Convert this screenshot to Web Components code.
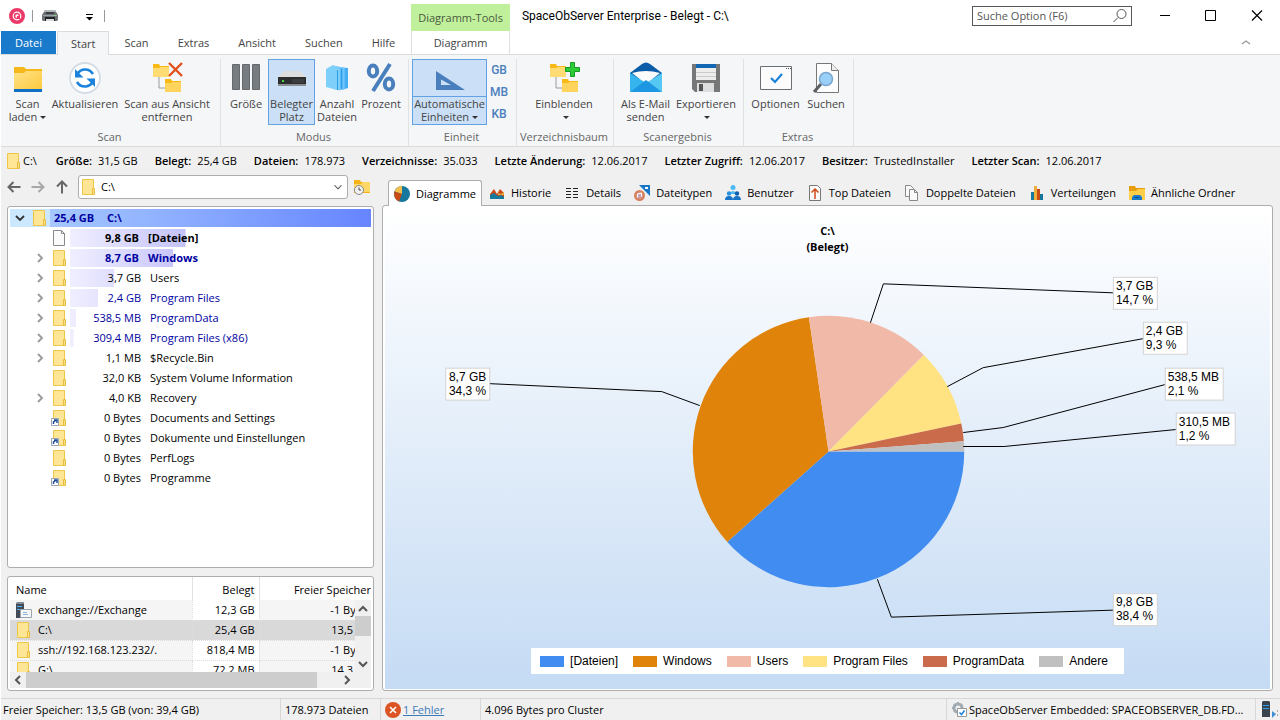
<!DOCTYPE html>
<html lang="de">
<head>
<meta charset="utf-8">
<title>SpaceObServer Enterprise - Belegt - C:\</title>
<style>
    html, body {
        height: 100%;
        margin: 0;
    }

    body {
        font: 11px/16px "Open Sans", "Noto Sans", sans-serif;
        color: #000;
        background: #f0f0f0;
        overflow: hidden;
    }
</style>
</head>
<body>
<so-app></so-app>

<script>
const folder = `
    <path d="M1.500.5h11v15h-11z" fill="#ffe596" stroke="#eec648"/>
    <path d="M11.500 9.500h2v6h-2z" fill="#ffe085" stroke="#e8bc3c"/>`;

const smallFolders = `
    <path d="M8 15v11h6" fill="none" stroke="#9a9a9a"/>
    <path d="M2 2h6l1 2h9v11H2z" fill="#f9b917"/>
    <path d="M2 6h6l2-1h8v10H2z" fill="#ffdc73"/>
    <path d="M14 17h6l1 2h9v11H14z" fill="#f9b917"/>
    <path d="M14 21h6l2-1h8v10H14z" fill="#ffd45c"/>`;

const link = `
    <path d="M-.5 8.500h7v7h-7z" fill="#fff" stroke="#9aa4b4"/>
    <path d="M1.500 14v-2l3-2M2 10h3v3" fill="none" stroke="#1e4c96" stroke-width="1.500"/>`;

// name: [viewBox size, markup]
const icons = {
    logo: [16, `<circle cx="8" cy="8" r="6.200" fill="#fff" stroke="#ec3b68" stroke-width="3.600"/><path d="M8 10.500a2.500 2.500 0 1 1 2.500-2.500" fill="none" stroke="#ec3b68" stroke-width="1.600"/><path d="M8 8h3v3H8z" fill="#ec3b68"/>`],
    printer: [16, `<path d="M3 2h10l3 5v5l-1 1H1l-1-1V7z" fill="#6c7276"/><path d="M3 2h10l1 2H2z" fill="#b4b8bb"/><path d="M4 4h8v2H4z" fill="#3c4044"/><path d="M1 7h14v1H1z" fill="#9ba0a4"/><path d="M3 9h10v4H3z" fill="#222"/><path d="M4 11h8v2H4z" fill="#d8dadc"/><path d="M12 7h2v1h-2z" fill="#7fd077"/>`],
    quickmenu: [16, `<path d="M5 6.500h7" stroke="#000"/><path d="M5 9h7l-3.500 3.500z" fill="#000"/>`],
    search: [16, `<circle cx="9.500" cy="6" r="4.500" fill="none" stroke="#555"/><path d="M6 9.500L1.500 14" stroke="#555"/>`],
    minimize: [16, `<path d="M3 7.500h10" stroke="#000"/>`],
    maximize: [16, `<path d="M2.500 2.500h10v10h-10z" fill="none" stroke="#000"/>`],
    close: [16, `<path d="M3 2.500l10 10M13 2.500l-10 10" stroke="#000" stroke-width="1.200"/>`],
    up: [16, `<path d="M4 9l4-3 4 3" fill="none" stroke="#999" stroke-width="1.400"/>`],
    chevron: [16, `<path d="M6 4l4 4-4 4" fill="none" stroke="#999" stroke-width="1.800"/>`],
    open: [16, `<path d="M4 6l4 4 4-4" fill="none" stroke="#333" stroke-width="1.800"/>`],
    drop: [16, `<path d="M4 6l4 4 4-4" fill="none" stroke="#444" stroke-width="1.200"/>`],
    folder: [16, folder],
    folderlink: [16, folder + link],
    file: [16, `<path d="M1.500.5h8l3 3v12h-11z" fill="#fafafa" stroke="#8a8a8a"/><path d="M9.500.5v3h3" fill="none" stroke="#8a8a8a"/>`],
    back: [16, `<path d="M14.500 8H2.500M7.500 3L2.500 8l5 5" fill="none" stroke="#666" stroke-width="2"/>`],
    forward: [16, `<path d="M1.500 8h12M8.500 3l5 5-5 5" fill="none" stroke="#a8a8a8" stroke-width="2"/>`],
    parent: [16, `<path d="M8 14.500v-12M3 7.500l5-5 5 5" fill="none" stroke="#666" stroke-width="2"/>`],
    recent: [16, `<path d="M0 1h6l1 2h9v11H0z" fill="#f5b21b"/><path d="M0 5h7l2-2h7v10H0z" fill="#ffd766"/><circle cx="5" cy="11" r="4.500" fill="#f2f2f2" stroke="#888"/><path d="M5 8.500V11h2" fill="none" stroke="#444"/>`],
    scanload: [32, `<path d="M2 5h10l2 2h16v21H2z" fill="#f7b81b"/><path d="M2 11h10l2-2h16v19H2z" fill="url(#g)"/><defs><linearGradient id="g" x2="1" y2="1"><stop stop-color="#ffe28a"/><stop offset="1" stop-color="#fdc93c"/></linearGradient></defs><path d="M2 27h28v3H2z" fill="#0f6fc5"/>`],
    refresh: [32, `<circle cx="16" cy="16" r="15" fill="#fff" stroke="#d3dbe5" stroke-width="1.800"/><path d="M24 12q-3-5-9-4.500-4 .5-6.500 4M8 20q3 5 9 4.500 4-.5 6.500-4" fill="none" stroke="#1c83dd" stroke-width="2.600"/><path d="M6 7v8.500h8.500zM26 25v-8.500h-8.500z" fill="#1c83dd"/>`],
    remove: [32, smallFolders + `<path d="M18 1l13 13M31 1L18 14" stroke="#e2501c" stroke-width="2.400" fill="none"/>`],
    insert: [32, smallFolders + `<path d="M22.500.5h4v5h5v4h-5v5h-4v-5h-5v-4h5z" fill="#2dcb35" stroke="#159a22"/>`],
    size: [32, `<g fill="#777c80" stroke="#64696d"><path d="M2.500 2.500h7v25h-7zM12.500 2.500h7v25h-7zM22.500 2.500h7v25h-7z"/></g>`],
    drive: [32, `<path d="M8 9h16l6 6H2z" fill="#dedede"/><path d="M2 15h28v7H2z" fill="#2c2e30"/><path d="M2 22h28v2H2z" fill="#8b8e90"/><path d="M6 18h2v2H6z" fill="#49d63f"/><path d="M16 18h12M16 20h12" stroke="#4a4c4e"/>`],
    files: [32, `<path d="M15 5l12 1v20l-6 2-6-3z" fill="#45aef5"/><path d="M12 4l11 2v21l-5 1-6-2z" fill="#5dbcf8" stroke="#82cdfb"/><path d="M5 7l7-4 7 4v20l-3 1-11-3z" fill="#7fcffb"/><path d="M16.500 8v20M20.500 7v20" stroke="#2c9bea"/>`],
    percent: [32, `<g fill="none" stroke="#4a7fbd" stroke-width="4"><ellipse cx="8" cy="9" rx="4.200" ry="5.500"/><ellipse cx="24" cy="22" rx="4.200" ry="5.500"/><path d="M25 2L8 29"/></g>`],
    ruler: [32, `<path d="M2 9l29 19H2zM7 17.500V23h10z" fill="#4a7fbd" fill-rule="evenodd"/>`],
    mail: [32, `<path d="M0 11L12 2q4-3 8 0l12 9v6H0z" fill="#0a5ca8"/><path d="M2 11q14-4 28 0L16 22z" fill="#fbfbfb"/><path d="M0 11l16 10L0 30z" fill="#35b4ee"/><path d="M32 11L16 21l16 9z" fill="#55c8f4"/><path d="M0 30L16 18l16 12z" fill="#1d97e2"/>`],
    save: [32, `<path d="M2 2h28v28H5l-3-3z" fill="#777"/><path d="M6 2h20v4H6z" fill="#1467b2"/><path d="M6 6h20v12H6z" fill="#ededed"/><path d="M6 10.500h20M6 14.500h20" stroke="#cbcbcb"/><path d="M7 21h17v9H7z" fill="#dedede"/><path d="M9 22h4v7H9z" fill="#555"/>`],
    options: [32, `<path d="M.5 4.500h31v23H.5z" fill="#fbfbfb" stroke="#6c7075"/><path d="M26 6.500h1M28 6.500h1M30 6.500h1" stroke="#555"/><path d="M11 16l4 4 7-8" fill="none" stroke="#1b82da" stroke-width="2.200"/>`],
    find: [32, `<path d="M6.500 1.500h15l7 7v22h-22z" fill="#fdfdfd" stroke="#777"/><path d="M21.500 1.500v7h7" fill="#eee" stroke="#777"/><path d="M11 22l-7 8" stroke="#5b6064" stroke-width="3"/><circle cx="16" cy="17" r="6.500" fill="#9ad0f7" stroke="#7aa6d0" stroke-width="1.500"/>`],
    pie: [16, `<circle cx="8" cy="8" r="8" fill="#17789e"/><path d="M8 8V0a8 8 0 0 0-7.500 5.500z" fill="#f3c04d"/><path d="M8 8L.5 5.500A8 8 0 0 0 5 15.500z" fill="#c84a15"/>`],
    history: [16, `<path d="M1 14V9l4-5 3 5 3-5 4 4v6z" fill="#cd4a18"/><path d="M9 8l3 1 3-2v3H9z" fill="#e9a83c"/><path d="M1 14v-4l4-2 4 3 3-1 3 2v2z" fill="#17789e"/>`],
    details: [16, `<path d="M2 3.500h5M9 3.500h5M2 6.500h5M9 6.500h5M2 9.500h5M9 9.500h5M2 12.500h5M9 12.500h5" stroke="#222"/>`],
    types: [16, `<path d="M5 0h11v11z" fill="#1777c8"/><path d="M11 2h3v2h-3z" fill="#fff"/><circle cx="5.500" cy="10.500" r="5.500" fill="#d9825e"/><circle cx="5.500" cy="10.500" r="3" fill="#c9a1b4"/><path d="M3.500 12.500V9l4-1v3.500" fill="none" stroke="#fff"/>`],
    user: [16, `<circle cx="8" cy="2.500" r="2.500" fill="#4cb9f3"/><path d="M4 9q4-6 8 0z" fill="#4cb9f3"/><circle cx="4" cy="8.500" r="2.200" fill="#2a93e0"/><circle cx="12" cy="8.500" r="2.200" fill="#0f5eaf"/><path d="M0 15q0-4 4-4t4 4zM8 15q0-4 4-4t4 4z" fill="#1673c8"/>`],
    top: [16, `<path d="M2.500.5h8l3 3v12h-11z" fill="#fafafa" stroke="#777"/><path d="M8 14V4M4.500 7.500L8 4l3.500 3.500" fill="none" stroke="#cf4a1c" stroke-width="1.500"/>`],
    copies: [16, `<path d="M1.500.5h5l3 3v8h-8z" fill="#fafafa" stroke="#888"/><path d="M5.500 4.500h5l3 3v8h-8z" fill="#fafafa" stroke="#888"/><path d="M10.500 4.500v3h3" fill="none" stroke="#888"/>`],
    bars: [16, `<path d="M2 7h3v8H2z" fill="#17789e"/><path d="M5 1h3v14H5z" fill="#f0ae3c"/><path d="M8 4h3v11H8z" fill="#c84a15"/><path d="M11 9h3v6h-3z" fill="#17789e"/>`],
    similar: [16, `<path d="M0 1h6l1 2h9v12H0z" fill="#e89d0c"/><path d="M0 6h7l2-2h7v11H0z" fill="#ffcd48"/><path d="M3 15v-3l2-2h6l2 2v3z" fill="#1b79ca"/><path d="M6 12.500h4" stroke="#0b4f92"/>`],
    server: [16, `<path d="M0 1h8v15H0z" fill="#414a55"/><path d="M0 1l1-1h7v2H0z" fill="#828c96"/><path d="M1 4.500h5M1 7.500h3" stroke="#4eb5ff"/><path d="M4.500 7.500h11v8h-11z" fill="#f7f7f7" stroke="#9da4ab"/><path d="M7 10.500h4M7 12.500h5" stroke="#8ab5dc"/>`],
    error: [16, `<circle cx="8" cy="8" r="8" fill="#dc5423"/><path d="M5 5l6 6M11 5l-6 6" stroke="#fff" stroke-width="1.600"/>`],
    service: [16, `<circle cx="7" cy="6" r="4" fill="none" stroke="#a3abb3" stroke-width="3"/><path d="M7 0v3M7 9v3M1 6h3M3 2l2 2M11 2L9 4M3 10l2-2" stroke="#a3abb3" stroke-width="2"/><path d="M6.500 6.500h9v8h-9z" fill="#fff" stroke="#999"/><path d="M8.500 10.500l2 2 3-4" fill="none" stroke="#1b82da" stroke-width="1.500"/>`],
    host: [18, `<path d="M2 1l1-1h6l1 1v15H2z" fill="#3b434d"/><path d="M3 4.500h6M3 7.500h6" stroke="#2f9df4"/><path d="M12 10l4 3-4 4z" fill="#3f8fd0"/><path d="M17 9h1v2h-1zM17 13h1v2h-1z" fill="#aaa"/>`]
};

class SoIcon extends HTMLElement {
    constructor() {
        super();
        this.attachShadow({ mode: 'open' });
    }

    connectedCallback() {
        const [box, markup] = icons[this.getAttribute('name')];
        this.shadowRoot.innerHTML = `
            <style>
                :host {
                    display: block;
                    flex: none;
                    width: var(--icon-size, 16px);
                    height: var(--icon-size, 16px);
                }

                svg {
                    display: block;
                    width: 100%;
                    height: 100%;
                    overflow: visible;
                }
            </style>
            <svg viewBox="0 0 ${box} ${box}" aria-hidden="true">${markup}</svg>
        `;
    }
}

customElements.define('so-icon', SoIcon);

class SoHeader extends HTMLElement {
    constructor() {
        super();
        this.attachShadow({ mode: 'open' });

        const tabs = ['Scan', 'Extras', 'Ansicht', 'Suchen', 'Hilfe'];

        this.shadowRoot.innerHTML = `
            <style>
                :host {
                    display: grid;
                    grid-template-columns: auto auto 1fr;
                    grid-template-rows: 31px 23px;
                    background: #fff;
                    border-bottom: 1px solid #dadbdc;
                }

                button {
                    font: inherit;
                    color: #444;
                    background: none;
                    border: 0;
                    padding: 0;
                }

                .quick, .title, .tabs, .window {
                    display: flex;
                    align-items: center;
                }

                .quick {
                    padding-left: 8px;
                }

                .quick i {
                    width: 1px;
                    height: 12px;
                    margin: 0 9px 0 7px;
                    background: #999;
                }

                .quick .menu {
                    margin-left: 23px;
                }

                .tabs {
                    gap: 1px;
                    padding-right: 2px;
                }

                .tabs button {
                    align-self: stretch;
                    padding: 0 14px;
                }

                .tabs .file {
                    color: #fff;
                    background: #1979ca;
                }

                .tabs .active {
                    position: relative;
                    border: 1px solid #dadbdc;
                    border-bottom: 0;
                    background: #f5f6f8;
                    padding: 0 13px;
                    margin-bottom: -1px;
                }

                .context {
                    margin-top: 4px;
                    line-height: 27px;
                    padding: 0 7px;
                    color: #4a5a40;
                    background: #c1f09c;
                }

                .context-tab {
                    border: solid #e0e0e0;
                    border-width: 0 1px;
                }

                .title {
                    padding-left: 12px;
                }

                .title > span {
                    font: 12px/16px "Roboto", "Open Sans", sans-serif;
                }

                label {
                    display: flex;
                    align-items: center;
                    box-sizing: border-box;
                    width: 160px;
                    height: 20px;
                    margin: 0 10px 0 auto;
                    padding: 0 3px 0 4px;
                    border: 1px solid #555;
                }

                input {
                    flex: 1;
                    min-width: 0;
                    font: inherit;
                    padding: 0;
                    border: 0;
                    outline: 0;
                }

                input::placeholder {
                    color: #555;
                }

                .window button {
                    display: grid;
                    place-items: center;
                    width: 46px;
                }

                .collapse {
                    justify-self: end;
                    padding: 0 26px;
                }
            </style>
            <div class="quick">
                <so-icon name="logo"></so-icon><i></i>
                <button aria-label="Drucken"><so-icon name="printer"></so-icon></button>
                <button class="menu" aria-label="Symbolleiste anpassen"><so-icon name="quickmenu"></so-icon></button><i></i>
            </div>
            <div class="context">Diagramm-Tools</div>
            <div class="title">
                <span>SpaceObServer Enterprise - Belegt - C:\\</span>
                <label><input type="text" aria-label="Suche Option" placeholder="Suche Option (F6)"><so-icon name="search"></so-icon></label>
                <div class="window">
                    <button aria-label="Minimieren"><so-icon name="minimize"></so-icon></button>
                    <button aria-label="Maximieren"><so-icon name="maximize"></so-icon></button>
                    <button aria-label="Schließen"><so-icon name="close"></so-icon></button>
                </div>
            </div>
            <nav class="tabs">
                <button class="file">Datei</button>
                <button class="active">Start</button>
                ${tabs.map(tab => `<button>${tab}</button>`).join('')}
            </nav>
            <button class="context-tab">Diagramm</button>
            <button class="collapse" aria-label="Menüband minimieren"><so-icon name="up"></so-icon></button>
        `;
    }
}

customElements.define('so-header', SoHeader);

class SoRibbonGroup extends HTMLElement {
    constructor() {
        super();
        this.attachShadow({ mode: 'open' });
    }

    connectedCallback() {
        this.shadowRoot.innerHTML = `
            <style>
                :host {
                    display: flex;
                    flex-direction: column;
                    justify-content: space-between;
                    flex: none;
                    padding: 0 5px 0 3px;
                    border-right: 1px solid #dfe1e3;
                    color: #666;
                }

                div {
                    display: flex;
                    color: #444;
                }

                span {
                    align-self: center;
                    white-space: nowrap;
                    line-height: 18px;
                }
            </style>
            <div><slot></slot></div>
            <span>${this.getAttribute('label')}</span>
        `;
    }
}

customElements.define('so-ribbon-group', SoRibbonGroup);

// A "|" in the label starts the second line.
class SoRibbonButton extends HTMLElement {
    constructor() {
        super();
        this.attachShadow({ mode: 'open' });
    }

    connectedCallback() {
        const label = this.getAttribute('label').replace('|', '<br>');
        const caret = this.hasAttribute('menu') ? '<i></i>' : '';

        this.shadowRoot.innerHTML = `
            <style>
                :host {
                    display: block;
                    --icon-size: 32px;
                }

                button {
                    display: flex;
                    flex-direction: column;
                    align-items: center;
                    width: 100%;
                    height: 66px;
                    padding: 2px 0 0;
                    font: inherit;
                    line-height: 13px;
                    color: inherit;
                    white-space: nowrap;
                    background: none;
                    border: 1px solid transparent;
                }

                span {
                    align-self: stretch;
                    display: flex;
                    flex-direction: column;
                    align-items: center;
                    padding-top: 3px;
                }

                i {
                    display: inline-block;
                    border: 3px solid transparent;
                    border-top-color: #333;
                    border-bottom: 0;
                    margin-left: 3px;
                    vertical-align: 2px;
                }

                :host([pressed]) button {
                    background: #cbe0f6;
                    border-color: #62a2e4;
                }

                :host([split]) span {
                    border-top: 1px solid #62a2e4;
                    margin-top: 2px;
                    padding-top: 0;
                }
            </style>
            <button><so-icon name="${this.getAttribute('icon')}"></so-icon><span><div>${label}${caret}</div></span></button>
        `;
    }
}

customElements.define('so-ribbon-button', SoRibbonButton);

class SoRibbon extends HTMLElement {
    constructor() {
        super();
        this.attachShadow({ mode: 'open' });
        this.shadowRoot.innerHTML = `
            <style>
                :host {
                    display: flex;
                    height: 87px;
                    padding: 4px 0 0;
                    background: #f5f6f8;
                    border-bottom: 1px solid #dadbdc;
                    overflow: hidden;
                }

                .w44 { width: 44px; }
                .w47 { width: 47px; }
                .w57 { width: 57px; }
                .w64 { width: 64px; }
                .w68 { width: 68px; }
                .w75 { width: 75px; }
                .w88 { width: 88px; }
                .w96 { width: 96px; }

                .units {
                    display: flex;
                    flex-direction: column;
                    width: 24px;
                }

                .units button {
                    flex: 1;
                    padding: 0;
                    border: 0;
                    background: none;
                    font: 500 12px "Roboto", sans-serif;
                    color: #4a7fbd;
                }
            </style>
            <so-ribbon-group label="Scan">
                <so-ribbon-button class="w47" icon="scanload" label="Scan|laden" menu></so-ribbon-button>
                <so-ribbon-button class="w68" icon="refresh" label="Aktualisieren"></so-ribbon-button>
                <so-ribbon-button class="w96" icon="remove" label="Scan aus Ansicht|entfernen"></so-ribbon-button>
            </so-ribbon-group>
            <so-ribbon-group label="Modus">
                <so-ribbon-button class="w44" icon="size" label="Größe"></so-ribbon-button>
                <so-ribbon-button class="w47" icon="drive" label="Belegter|Platz" pressed></so-ribbon-button>
                <so-ribbon-button class="w44" icon="files" label="Anzahl|Dateien"></so-ribbon-button>
                <so-ribbon-button class="w44" icon="percent" label="Prozent"></so-ribbon-button>
            </so-ribbon-group>
            <so-ribbon-group label="Einheit">
                <so-ribbon-button class="w75" icon="ruler" label="Automatische|Einheiten" menu pressed split></so-ribbon-button>
                <div class="units"><button>GB</button><button>MB</button><button>KB</button></div>
            </so-ribbon-group>
            <so-ribbon-group label="Verzeichnisbaum">
                <so-ribbon-button class="w88" icon="insert" label="Einblenden|" menu></so-ribbon-button>
            </so-ribbon-group>
            <so-ribbon-group label="Scanergebnis">
                <so-ribbon-button class="w57" icon="mail" label="Als E-Mail|senden"></so-ribbon-button>
                <so-ribbon-button class="w64" icon="save" label="Exportieren|" menu></so-ribbon-button>
            </so-ribbon-group>
            <so-ribbon-group label="Extras">
                <so-ribbon-button class="w57" icon="options" label="Optionen"></so-ribbon-button>
                <so-ribbon-button class="w44" icon="find" label="Suchen"></so-ribbon-button>
            </so-ribbon-group>
        `;
    }
}

customElements.define('so-ribbon', SoRibbon);

class SoInfoBar extends HTMLElement {
    constructor() {
        super();
        this.attachShadow({ mode: 'open' });

        const facts = [
            ['Größe:', '31,5 GB'],
            ['Belegt:', '25,4 GB'],
            ['Dateien:', '178.973'],
            ['Verzeichnisse:', '35.033'],
            ['Letzte Änderung:', '12.06.2017'],
            ['Letzter Zugriff:', '12.06.2017'],
            ['Besitzer:', 'TrustedInstaller'],
            ['Letzter Scan:', '12.06.2017']
        ];

        this.shadowRoot.innerHTML = `
            <style>
                :host {
                    display: flex;
                    align-items: center;
                    gap: 17px;
                    height: 28px;
                    padding-left: 5px;
                    white-space: nowrap;
                }

                span {
                    display: flex;
                    gap: 6px;
                }

                b {
                    font-weight: 600;
                }

                .path {
                    gap: 1px;
                    margin-right: 2px;
                }
            </style>
            <span class="path"><so-icon name="folder"></so-icon>C:\\</span>
            ${facts.map(([name, value]) => `<span><b>${name}</b>${value}</span>`).join('')}
        `;
    }
}

customElements.define('so-info-bar', SoInfoBar);

class SoAddress extends HTMLElement {
    constructor() {
        super();
        this.attachShadow({ mode: 'open' });
        this.shadowRoot.innerHTML = `
            <style>
                :host {
                    display: flex;
                    align-items: center;
                    gap: 8px;
                    height: 24px;
                    margin: 0 4px 7px -1px;
                }

                button {
                    padding: 0;
                    border: 0;
                    background: none;
                }

                .box {
                    flex: 1;
                    display: flex;
                    align-items: center;
                    gap: 4px;
                    height: 22px;
                    padding: 0 2px;
                    background: #fff;
                    border: 1px solid #adadad;
                    border-radius: 3px;
                }

                .box so-icon:last-child {
                    --icon-size: 14px;
                }

                select {
                    flex: 1;
                    appearance: none;
                    border: 0;
                    padding: 0;
                    font: inherit;
                    background: none;
                    outline: 0;
                }

                .recent {
                    margin-left: -2px;
                }
            </style>
            <button aria-label="Zurück"><so-icon name="back"></so-icon></button>
            <button aria-label="Vorwärts"><so-icon name="forward"></so-icon></button>
            <button aria-label="Übergeordneter Ordner"><so-icon name="parent"></so-icon></button>
            <div class="box">
                <so-icon name="folder"></so-icon>
                <select aria-label="Pfad"><option>C:\\</option></select>
                <so-icon name="drop"></so-icon>
            </div>
            <button class="recent" aria-label="Zuletzt verwendet"><so-icon name="recent"></so-icon></button>
        `;
    }
}

customElements.define('so-address', SoAddress);

class SoTreeRow extends HTMLElement {
    constructor() {
        super();
        this.attachShadow({ mode: 'open' });
    }

    connectedCallback() {
        this.setAttribute('role', 'treeitem');
        const expander = this.getAttribute('expander');

        this.shadowRoot.innerHTML = `
            <style>
                :host {
                    display: flex;
                    align-items: center;
                    height: 20px;
                    white-space: nowrap;
                    padding-left: 22px;
                }

                .toggle {
                    width: 16px;
                    height: 16px;
                    padding: 0;
                    border: 0;
                    background: none;
                }

                .icon {
                    margin: 0 2px 0 4px;
                }

                .cell {
                    flex: 1;
                    display: flex;
                    gap: 9px;
                    line-height: 18px;
                    background: linear-gradient(90deg, #f0efff, #c4c2fb 115px) no-repeat 0 0 / var(--share, 0) 100%;
                }

                .size {
                    width: 71px;
                    text-align: right;
                }

                :host([strong]) {
                    font-weight: 700;
                }

                :host([strong]) .size {
                    width: 69px;
                }

                :host([compressed]) {
                    color: #0000a0;
                }

                :host([root]) {
                    padding-left: 2px;
                    background: linear-gradient(#cce8ff, #cce8ff) no-repeat 0 1px / 100% 18px;
                }

                :host([root]) .cell {
                    padding-left: 4px;
                    background: linear-gradient(90deg, #a6c8ff, #6685ff);
                }

                :host([root]) .size {
                    width: 44px;
                    text-align: left;
                }
            </style>
            <span class="toggle">${expander ? `<button class="toggle" aria-label="Aufklappen"><so-icon name="${expander}"></so-icon></button>` : ''}</span>
            <so-icon class="icon" name="${this.getAttribute('icon')}"></so-icon>
            <div class="cell"><span class="size">${this.getAttribute('size')}</span><slot></slot></div>
        `;
    }
}

customElements.define('so-tree-row', SoTreeRow);

class SoTree extends HTMLElement {
    constructor() {
        super();
        this.attachShadow({ mode: 'open' });
        this.shadowRoot.innerHTML = `
            <style>
                :host {
                    display: block;
                    flex: 1;
                    min-height: 0;
                    overflow: hidden;
                    padding: 1px 2px;
                    background: #fff;
                    border: 1px solid #adadad;
                    border-radius: 3px;
                }
            </style>
            <div role="tree">
                <so-tree-row root strong compressed expander="open" icon="folder" size="25,4 GB">C:\\</so-tree-row>
                <so-tree-row strong icon="file" size="9,8 GB" style="--share: 38.4%">[Dateien]</so-tree-row>
                <so-tree-row strong compressed expander="chevron" icon="folder" size="8,7 GB" style="--share: 34.3%">Windows</so-tree-row>
                <so-tree-row expander="chevron" icon="folder" size="3,7 GB" style="--share: 14.7%">Users</so-tree-row>
                <so-tree-row compressed expander="chevron" icon="folder" size="2,4 GB" style="--share: 9.3%">Program Files</so-tree-row>
                <so-tree-row compressed expander="chevron" icon="folder" size="538,5 MB" style="--share: 2.1%">ProgramData</so-tree-row>
                <so-tree-row compressed expander="chevron" icon="folder" size="309,4 MB" style="--share: 1.2%">Program Files (x86)</so-tree-row>
                <so-tree-row expander="chevron" icon="folder" size="1,1 MB">$Recycle.Bin</so-tree-row>
                <so-tree-row icon="folder" size="32,0 KB">System Volume Information</so-tree-row>
                <so-tree-row expander="chevron" icon="folder" size="4,0 KB">Recovery</so-tree-row>
                <so-tree-row icon="folderlink" size="0 Bytes">Documents and Settings</so-tree-row>
                <so-tree-row icon="folderlink" size="0 Bytes">Dokumente und Einstellungen</so-tree-row>
                <so-tree-row icon="folder" size="0 Bytes">PerfLogs</so-tree-row>
                <so-tree-row icon="folderlink" size="0 Bytes">Programme</so-tree-row>
            </div>
        `;
    }
}

customElements.define('so-tree', SoTree);

class SoDrives extends HTMLElement {
    constructor() {
        super();
        this.attachShadow({ mode: 'open' });

        const drives = [
            ['server', 'exchange://Exchange', '12,3 GB', '-1 Bytes'],
            ['folder', 'C:\\', '25,4 GB', '13,5 GB'],
            ['folder', 'ssh://192.168.123.232/.', '818,4 MB', '-1 Bytes'],
            ['folder', 'G:\\', '72,2 MB', '14,3 GB']
        ];
        const arrow = d => `<svg viewBox="0 0 16 16" aria-hidden="true"><path d="${d}" fill="none" stroke="#555" stroke-width="2"/></svg>`;

        this.shadowRoot.innerHTML = `
            <style>
                :host {
                    display: block;
                    padding: 0 2px 2px;
                    background: #fff;
                    border: 1px solid #adadad;
                    border-radius: 3px;
                }

                .view {
                    display: grid;
                    grid-template-rows: 23px 72px;
                    overflow: hidden;
                }

                table {
                    grid-area: 1 / 1 / 3 / 2;
                    width: 100%;
                    align-self: start;
                    table-layout: fixed;
                    border-collapse: collapse;
                    white-space: nowrap;
                }

                th, td {
                    box-sizing: border-box;
                    height: 20px;
                    padding: 0 4px 0 0;
                    text-align: right;
                    font-weight: 400;
                }

                th {
                    height: 23px;
                    padding-top: 2px;
                    border-right: 1px solid #e2e2e2;
                }

                td {
                    border-bottom: 1px dotted #ddd;
                    border-right: 1px dotted #ddd;
                    line-height: 18px;
                }

                th:first-child, td:first-child {
                    width: 182px;
                    padding-left: 6px;
                    text-align: left;
                }

                th:nth-child(2) {
                    width: 67px;
                }

                th:last-child, td:last-child {
                    padding-right: 0;
                    border-right: 0;
                }

                td:first-child, td:last-child {
                    background: #f5f5f5;
                }

                td span {
                    display: flex;
                    gap: 6px;
                    align-items: center;
                }

                tr.selected td {
                    background: #d9d9d9;
                }

                .bar {
                    display: flex;
                    background: #f0f0f0;
                }

                .vertical {
                    grid-area: 2 / 1;
                    justify-self: end;
                    flex-direction: column;
                    width: 16px;
                    position: relative;
                }

                .track {
                    flex: 1;
                }

                .thumb {
                    background: #cdcdcd;
                    height: 20px;
                }

                .horizontal .thumb {
                    width: 93%;
                    height: 16px;
                }

                .horizontal {
                    padding-right: 16px;
                }

                svg {
                    flex: none;
                    width: 16px;
                    height: 16px;
                }
            </style>
            <div class="view">
                <table>
                    <thead><tr><th>Name</th><th>Belegt</th><th>Freier Speicher</th></tr></thead>
                    <tbody>
                        ${drives.map(([icon, name, used, free], i) => `
                            <tr${i === 1 ? ' class="selected"' : ''}>
                                <td><span><so-icon name="${icon}"></so-icon>${name}</span></td>
                                <td>${used}</td>
                                <td>${free}</td>
                            </tr>
                        `).join('')}
                    </tbody>
                </table>
                <div class="bar vertical">
                    ${arrow('M4 11l4-4 4 4')}
                    <div class="track"><div class="thumb"></div></div>
                    ${arrow('M4 6l4 4 4-4')}
                </div>
            </div>
            <div class="bar horizontal">
                ${arrow('M10 4L6 8l4 4')}
                <div class="track"><div class="thumb"></div></div>
                ${arrow('M6 4l4 4-4 4')}
            </div>
        `;
    }
}

customElements.define('so-drives', SoDrives);

const slices = [
    { name: '[Dateien]', size: '9,8 GB', share: 38.4, color: '#418cf0', line: [49, 128, 63, 166, 285, 159], box: [285, 142, 44] },
    { name: 'Windows', size: '8,7 GB', share: 34.3, color: '#e0830a', line: [-129, -46, -167, -60, -340, -68], box: [-384, -84, 44], end: true },
    { name: 'Users', size: '3,7 GB', share: 14.7, color: '#f1b9a8', line: [42, -129, 55, -168, 285, -159], box: [285, -175, 44] },
    { name: 'Program Files', size: '2,4 GB', share: 9.3, color: '#ffe382', line: [119, -65, 155, -84, 315, -113], box: [315, -130, 44] },
    { name: 'ProgramData', size: '538,5 MB', share: 2.1, color: '#ca6b4b', line: [135, -19, 175, -24, 337, -67], box: [337, -84, 58] },
    { name: 'Andere', size: '310,5 MB', share: 1.2, color: '#c0c0c0', line: [135, -5, 176, -5, 348, -22], box: [348, -39, 59] }
];

class SoChart extends HTMLElement {
    constructor() {
        super();
        this.attachShadow({ mode: 'open' });
        this.shadowRoot.innerHTML = `
            <style>
                :host {
                    flex: 1;
                    min-height: 0;
                    display: grid;
                    grid-template-rows: minmax(0, 1fr);
                    justify-items: center;
                    padding: 1px 2px;
                    border: 1px solid #adadad;
                    border-radius: 3px;
                    background: linear-gradient(#fff, #c5dbf4) content-box, #fff;
                }

                :host > * {
                    grid-area: 1 / 1;
                }

                svg, h1, ul {
                    grid-area: 1 / 1;
                }

                svg {
                    width: 100%;
                    height: 100%;
                    font: 12px "Liberation Sans", Arial, sans-serif;
                }

                h1 {
                    align-self: start;
                    margin: 16px 0 0;
                    font-size: 11px;
                    line-height: 16px;
                    text-align: center;
                }

                ul {
                    align-self: end;
                    display: flex;
                    gap: 15px;
                    margin: 0 0 15px;
                    padding: 0 16px 0 9px;
                    list-style: none;
                    font: 12px/26px "Liberation Sans", Arial, sans-serif;
                    background: #fff;
                }

                li {
                    display: flex;
                    align-items: center;
                    gap: 6px;
                }

                li i {
                    width: 24px;
                    height: 11px;
                }
            </style>
            <svg viewBox="-444 -245 886 483" role="img" aria-label="Belegter Platz auf C:">${this._pie()}${this._callouts()}</svg>
            <h1>C:\\<br>(Belegt)</h1>
            <ul>${slices.map(s => `<li><i style="background: ${s.color}"></i>${s.name}</li>`).join('')}</ul>
        `;
    }

    _pie() {
        const radius = 136;
        const point = share => {
            const angle = share / 100 * 2 * Math.PI;
            return `${radius * Math.cos(angle)} ${radius * Math.sin(angle)}`;
        };
        let start = 0;

        return slices.map(({ share, color }) => {
            const end = start + share;
            const path = `<path d="M0 0L${point(start)}A${radius} ${radius} 0 0 1 ${point(end)}z" fill="${color}"/>`;
            start = end;
            return path;
        }).join('');
    }

    _callouts() {
        return slices.map(({ size, share, line, box: [x, y, width], end }) => {
            const textX = end ? x + width - 3 : x + 3;
            const anchor = end ? 'end' : 'start';

            return `
                <polyline points="${line.join(' ')}" fill="none" stroke="#000"/>
                <rect x="${x + 0.5}" y="${y + 0.5}" width="${width}" height="32" fill="#fff" stroke="#d3d3d3"/>
                <text text-anchor="${anchor}" x="${textX}" y="${y + 13}">${size}</text>
                <text text-anchor="${anchor}" x="${textX}" y="${y + 27}">${String(share).replace('.', ',')} %</text>
            `;
        }).join('');
    }
}

customElements.define('so-chart', SoChart);

class SoViews extends HTMLElement {
    constructor() {
        super();
        this.attachShadow({ mode: 'open' });

        const views = [
            ['pie', 'Diagramme'],
            ['history', 'Historie'],
            ['details', 'Details'],
            ['types', 'Dateitypen'],
            ['user', 'Benutzer'],
            ['top', 'Top Dateien'],
            ['copies', 'Doppelte Dateien'],
            ['bars', 'Verteilungen'],
            ['similar', 'Ähnliche Ordner']
        ];

        this.shadowRoot.innerHTML = `
            <style>
                :host {
                    display: flex;
                    gap: 1px;
                    padding: 0 6px;
                    margin-top: 5px;
                }

                button {
                    display: flex;
                    align-items: center;
                    gap: 6px;
                    height: 25px;
                    padding: 0 6px;
                    border: 0;
                    background: none;
                    font: inherit;
                    color: #000;
                    white-space: nowrap;
                }

                .active {
                    position: relative;
                    height: 26px;
                    margin-bottom: -1px;
                    padding: 0 5px;
                    background: #fff;
                    border: 1px solid #adadad;
                    border-bottom: 0;
                    border-radius: 3px 3px 0 0;
                }
            </style>
            ${views.map(([icon, label], i) => `<button${i ? '' : ' class="active"'}><so-icon name="${icon}"></so-icon>${label}</button>`).join('')}
        `;
    }
}

customElements.define('so-views', SoViews);

class SoStatus extends HTMLElement {
    constructor() {
        super();
        this.attachShadow({ mode: 'open' });
        this.shadowRoot.innerHTML = `
            <style>
                :host {
                    display: flex;
                    height: 21px;
                    border-top: 1px solid #d7d7d7;
                    white-space: nowrap;
                }

                span {
                    box-sizing: border-box;
                    display: flex;
                    align-items: center;
                    gap: 2px;
                    padding: 0 4px;
                    border-right: 1px solid #d7d7d7;
                }

                .space { width: 280px; padding-left: 2px; }
                .count { width: 100px; }
                .errors { width: 100px; }
                .cluster { flex: 1; border: 0; }
                .host { width: 309px; border: 0; border-left: 1px solid #d7d7d7; }
                .server { width: 25px; border: 0; border-left: 1px solid #d7d7d7; --icon-size: 18px; }

                a {
                    color: #3d7ab8;
                }
            </style>
            <span class="space">Freier Speicher: 13,5 GB (von: 39,4 GB)</span>
            <span class="count">178.973 Dateien</span>
            <span class="errors"><so-icon name="error"></so-icon><a href="#">1 Fehler</a></span>
            <span class="cluster">4.096 Bytes pro Cluster</span>
            <span class="host"><so-icon name="service"></so-icon>SpaceObServer Embedded: SPACEOBSERVER_DB.FD...</span>
            <span class="server"><so-icon name="host"></so-icon></span>
        `;
    }
}

customElements.define('so-status', SoStatus);

class SoApp extends HTMLElement {
    constructor() {
        super();
        this.attachShadow({ mode: 'open' });
        this.shadowRoot.innerHTML = `
            <style>
                :host {
                    display: flex;
                    flex-direction: column;
                    box-sizing: border-box;
                    height: 100vh;
                    border-left: 1px solid #fff;
                }

                main {
                    flex: 1;
                    min-height: 0;
                    display: grid;
                    grid-template-columns: 367fr 891fr;
                    gap: 8px;
                    padding: 0 7px 7px 6px;
                }

                section {
                    display: flex;
                    flex-direction: column;
                    min-width: 0;
                    min-height: 0;
                }

                so-drives {
                    margin-top: 8px;
                }
            </style>
            <so-header></so-header>
            <so-ribbon></so-ribbon>
            <so-info-bar></so-info-bar>
            <main>
                <section>
                    <so-address></so-address>
                    <so-tree></so-tree>
                    <so-drives></so-drives>
                </section>
                <section>
                    <so-views></so-views>
                    <so-chart></so-chart>
                </section>
            </main>
            <so-status></so-status>
        `;
    }
}

customElements.define('so-app', SoApp);
</script>
</body>
</html>
